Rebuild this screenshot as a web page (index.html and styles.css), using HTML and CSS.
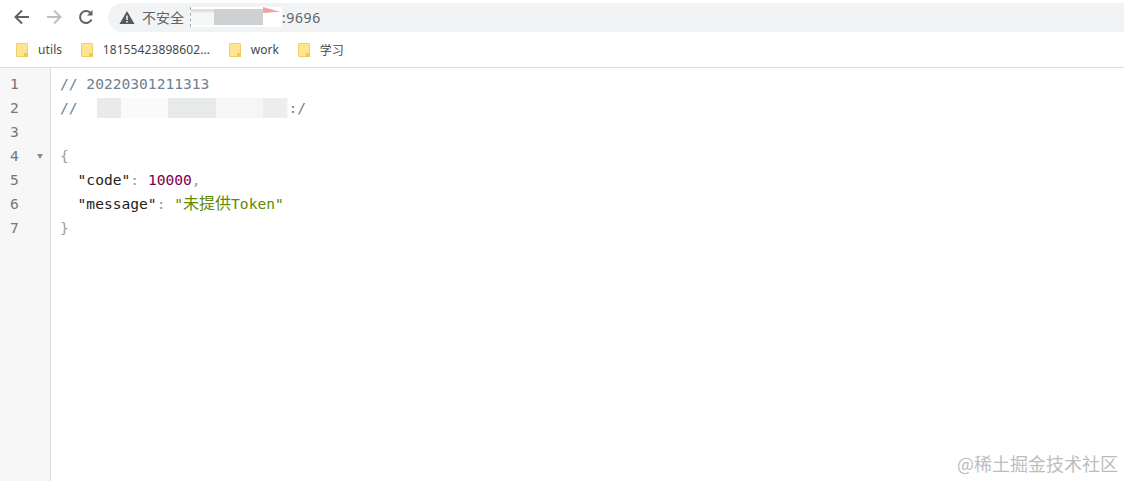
FILE: index.html
```html
<!DOCTYPE html>
<html lang="zh">
<head>
<meta charset="utf-8">
<title>Token</title>
<link rel="stylesheet" href="styles.css">
</head>
<body>
<header class="chrome">
  <div class="toolbar">
    <svg class="nav" width="18" height="18" viewBox="0 0 18 18"><path d="M16 9H3M9 2.500L2.500 9L9 15.500" fill="none" stroke="#5f6368" stroke-width="2"/></svg>
    <svg class="nav" width="18" height="18" viewBox="0 0 18 18"><path d="M2 9H15M9 2.500L15.500 9L9 15.500" fill="none" stroke="#bcbfc3" stroke-width="2"/></svg>
    <svg class="nav" width="18" height="18" viewBox="0 0 18 18"><path d="M14.500 11.500A6 6 0 1 1 13.300 4.800" fill="none" stroke="#5f6368" stroke-width="2"/><path d="M15.500 2V7.500H10Z" fill="#5f6368"/></svg>
    <div class="omnibox">
      <svg width="16" height="15" viewBox="0 0 16 15"><path d="M8 1L15.500 14H.5Z" fill="#55585c"/><path d="M7.200 5.500H8.800V10H7.200ZM7.200 11H8.800V12.500H7.200Z" fill="#f1f3f4"/></svg>
      <span class="insecure">不安全</span>
      <span class="host">
        <span class="blur blur-a"></span><span class="blur blur-b"></span><span class="blur blur-c"></span>
      </span>
      <span class="port">:9696</span>
    </div>
  </div>
  <nav class="bookmarks">
    <a class="mark"><i class="folder"></i>utils</a>
    <a class="mark"><i class="folder"></i>18155423898602...</a>
    <a class="mark"><i class="folder"></i>work</a>
    <a class="mark"><i class="folder"></i>学习</a>
  </nav>
</header>
<main class="editor">
  <div class="gutter">
    <div class="num">1</div><div class="num">2</div><div class="num">3</div>
    <div class="num fold">4<span class="caret"></span></div>
    <div class="num">5</div><div class="num">6</div><div class="num">7</div>
  </div>
  <div class="code">
    <div class="line comment">// 20220301211313</div>
    <div class="line comment">//<span class="mask"></span>:/</div>
    <div class="line">&nbsp;</div>
    <div class="line brace">{</div>
    <div class="line">  <span class="key">"code"</span><span class="colon">:</span> <span class="number">10000</span><span class="colon">,</span></div>
    <div class="line">  <span class="key">"message"</span><span class="colon">:</span> <span class="string">"<span class="cjk">未提供</span>Token"</span></div>
    <div class="line brace">}</div>
  </div>
</main>
<div class="watermark">@稀土掘金技术社区</div>
</body>
</html>
```
FILE: styles.css
```css
html, body { margin: 0; height: 100%; overflow: hidden; background: #fff; }
body { position: relative; display: flex; flex-direction: column; font-family: "Noto Sans", "Noto Sans CJK SC", sans-serif; }
.chrome { height: 67px; border-bottom: 1px solid #dadce0; flex: none; }
.toolbar { height: 34px; display: flex; align-items: center; padding-left: 13px; box-sizing: border-box; }
.nav { margin-right: 14px; flex: none; }
.omnibox { height: 29px; flex: 1; margin-left: -1px; background: #f1f3f4; border-radius: 15px 0 0 15px; display: flex; align-items: center; padding-left: 11px; font-size: 14px; color: #5f6368; }
.insecure { margin-left: 7px; }
.host { width: 92px; height: 20px; margin-left: 6px; display: flex; align-items: flex-start; background: #fff; border-left: 1px dashed #a8abae; box-sizing: border-box; }
.blur { display: block; height: 16px; margin-top: 2px; }
.blur-a { width: 23px; background: linear-gradient(#dcdedf 0 2px, #f6f7f7 4px); }
.blur-b { width: 49px; background: #cfd0d1; }
.blur-c { width: 17px; height: 6px; margin-top: 0; background: #eda3a0; clip-path: polygon(0 0, 100% 80%, 0 100%); }
.port { letter-spacing: .6px; }
.bookmarks { height: 33px; display: flex; align-items: center; font-size: 12px; letter-spacing: .1px; color: #45494d; padding: 0 0 2px 16px; box-sizing: border-box; }
.mark { display: flex; align-items: center; margin-right: 18.5px; }
.folder { position: relative; width: 12px; height: 14px; background: #ffe58f; border: 1px solid #efcf6c; border-radius: 1px; box-sizing: border-box; margin-right: 10px; }
.folder::after { content: ""; position: absolute; right: -1px; bottom: -1px; width: 4px; height: 4px; background: #f5c94f; }
.editor { flex: 1; min-height: 0; display: flex; font-family: "DejaVu Sans Mono", "Noto Sans CJK SC", monospace; font-size: 14.6px; line-height: 24px; }
.gutter { width: 51px; box-sizing: border-box; background: #f7f7f7; border-right: 1px solid #ddd; color: #767676; padding-top: 4px; }
.num { padding-left: 10px; position: relative; }
.caret { position: absolute; left: 37px; top: 10px; border-left: 3px solid transparent; border-right: 3px solid transparent; border-top: 5px solid #8a8a8a; }
.code { padding: 4px 0 0 9px; color: #222; }
.line { height: 24px; white-space: pre; }
.comment { color: #708090; }
.mask { display: inline-block; width: 211px; height: 20px; vertical-align: -5px; background: linear-gradient(90deg, #fff 0 19px, #e9eaea 19px 43px, #fafafa 43px 90px, #e8e9e9 90px 138px, #f6f6f6 138px 185px, #ededee 185px 208px, #fff 211px); }
.brace { color: #a09c92; }
.colon { color: #999; }
.key { color: #222; }
.number { color: #80004d; }
.string { color: #5f8a00; }
.cjk { font-size: 16px; }
.watermark { position: absolute; right: 6px; bottom: 6px; font-family: "Noto Sans CJK SC", sans-serif; font-size: 18px; line-height: 24px; color: #bdbdbd; }
```
